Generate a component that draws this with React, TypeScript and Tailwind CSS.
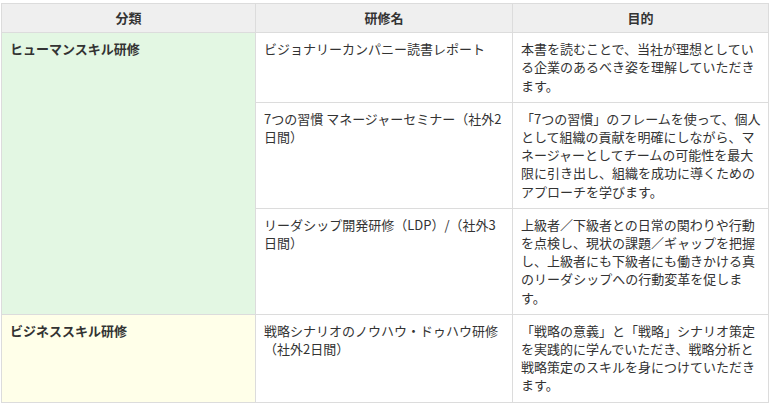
import React from "react";

const Lines = ({ lines }: { lines: string[] }) => (
  <>
    {lines.map((l, i) => (
      <React.Fragment key={i}>
        {l}
        {i < lines.length - 1 && <br />}
      </React.Fragment>
    ))}
  </>
);

type Row = { course: string[]; purpose: string[] };

const human: Row[] = [
  {
    course: ["ビジョナリーカンパニー読書レポート"],
    purpose: [
      "本書を読むことで、当社が理想としてい",
      "る企業のあるべき姿を理解していただき",
      "ます。",
    ],
  },
  {
    course: ["7つの習慣 マネージャーセミナー（社外2", "日間）"],
    purpose: [
      "「7つの習慣」のフレームを使って、個人",
      "として組織の貢献を明確にしながら、マ",
      "ネージャーとしてチームの可能性を最大",
      "限に引き出し、組織を成功に導くための",
      "アプローチを学びます。",
    ],
  },
  {
    course: ["リーダシップ開発研修（LDP）/（社外3", "日間）"],
    purpose: [
      "上級者／下級者との日常の関わりや行動",
      "を点検し、現状の課題／ギャップを把握",
      "し、上級者にも下級者にも働きかける真",
      "のリーダシップへの行動変革を促しま",
      "す。",
    ],
  },
];

const business: Row = {
  course: ["戦略シナリオのノウハウ・ドゥハウ研修", "（社外2日間）"],
  purpose: [
    "「戦略の意義」と「戦略」シナリオ策定",
    "を実践的に学んでいただき、戦略分析と",
    "戦略策定のスキルを身につけていただき",
    "ます。",
  ],
};

const td = "border border-[#dcdcdc] px-2 pt-[7px] pb-[7px] align-top whitespace-nowrap";
const th = "border border-[#dcdcdc] bg-[#efefef] px-2 pt-[5px] pb-[5px] text-center font-bold";

export default function App() {
  return (
    <div className="w-[770px] h-[408px] bg-white pt-[3px] pl-[1px] font-['Noto_Sans_CJK_JP','Noto_Sans',sans-serif] text-[13px] leading-[18.2px] text-[#333]">
      <table className="w-[767px] table-fixed border-collapse">
        <colgroup>
          <col className="w-[254px]" />
          <col className="w-[257px]" />
          <col className="w-[256px]" />
        </colgroup>
        <thead>
          <tr>
            <th className={th}>分類</th>
            <th className={th}>研修名</th>
            <th className={th}>目的</th>
          </tr>
        </thead>
        <tbody>
          {human.map((r, i) => (
            <tr key={i}>
              {i === 0 && (
                <td rowSpan={3} className={`${td} bg-[#e3f7e3] font-bold`}>
                  ヒューマンスキル研修
                </td>
              )}
              <td className={td}>
                <Lines lines={r.course} />
              </td>
              <td className={td}>
                <Lines lines={r.purpose} />
              </td>
            </tr>
          ))}
          <tr>
            <td className={`${td} bg-[#ffffe9] font-bold`}>ビジネススキル研修</td>
            <td className={td}>
              <Lines lines={business.course} />
            </td>
            <td className={td}>
              <Lines lines={business.purpose} />
            </td>
          </tr>
        </tbody>
      </table>
    </div>
  );
}
